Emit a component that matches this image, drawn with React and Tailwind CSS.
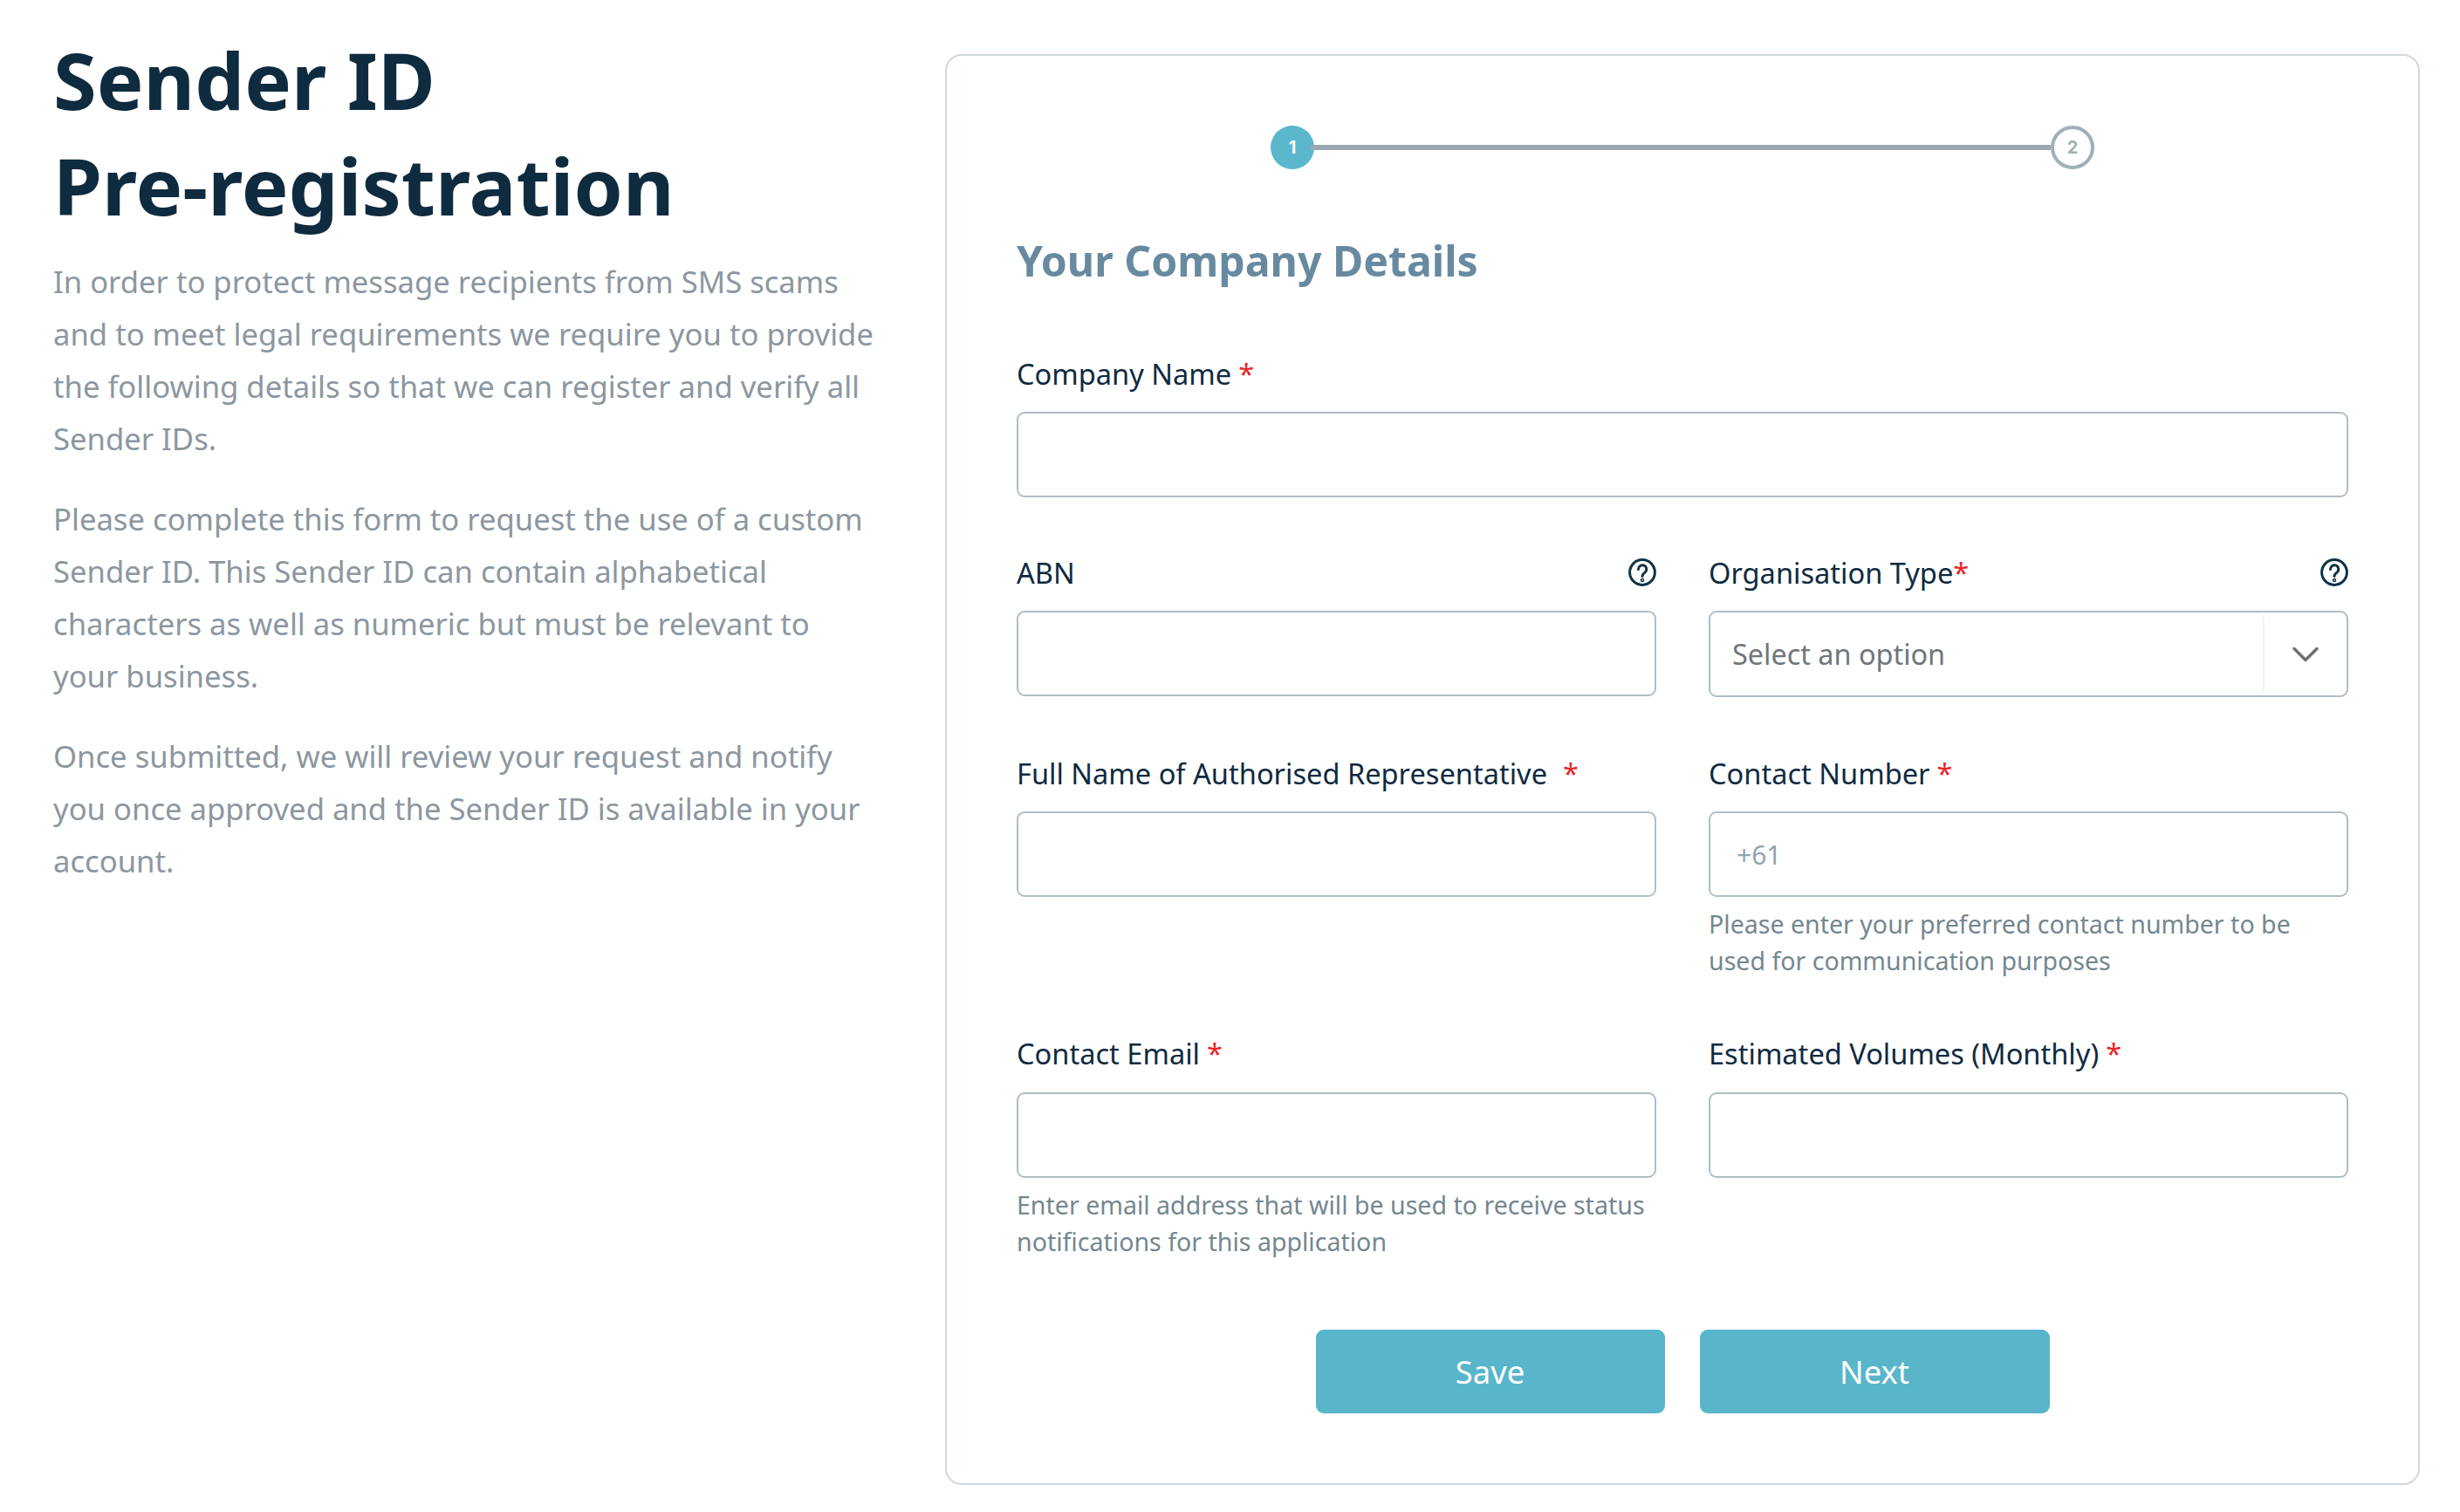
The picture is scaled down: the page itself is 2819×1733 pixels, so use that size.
import React from "react";
import { ChevronDown } from "lucide-react";

const inputCls = "block w-full h-[98px] border-2 border-[#b0bec5] rounded-[9px] bg-white px-[30px] text-[30px] text-[#0f2b3f] outline-none placeholder:text-[#90a4ae]";

function HelpIcon() {
  return (
    <svg viewBox="0 0 32 32" className="w-[32px] h-[32px] shrink-0 -mt-[2px]" fill="none" stroke="#0f3347" strokeWidth="3" strokeLinecap="round">
      <circle cx="16" cy="16" r="14.4" />
      <path d="M11.4 12.4a4.7 4.7 0 1 1 7.6 3.7c-1.9 1.4-3 2.2-3 4.4" />
      <circle cx="16" cy="25" r="0.7" />
    </svg>
  );
}

function Label({ children, star, gap = "ml-[8px]", help }) {
  return (
    <div className="flex items-center justify-between h-[44px] text-[32.6px] leading-[44px] text-[#0f2b3f]">
      <span>
        {children}
        {star && <span className={`${gap} text-[#e8262a]`}>*</span>}
      </span>
      {help && <HelpIcon />}
    </div>
  );
}

function Hint({ children, className = "mt-[10px]" }) {
  return <p className={`${className} text-[28.55px] leading-[42px] text-[#74878f]`}>{children}</p>;
}

export default function App() {
  return (
    <div className="min-h-[1733px] bg-white flex items-start pt-[31px] pl-[61px] font-['Noto_Sans',sans-serif]">
      <div className="w-[1022px] shrink-0 pr-[76px]">
        <h1 className="text-[90.2px] leading-[121px] font-bold text-[#0f2b3f]">Sender ID<br />Pre-registration</h1>
        <div className="mt-[20px] flex flex-col gap-[32px] text-[34.65px] leading-[60px] text-[#8c979f]">
          <p>In order to protect message recipients from SMS scams and to meet legal requirements we require you to provide the following details so that we can register and verify all Sender IDs.</p>
          <p>Please complete this form to request the use of a custom Sender ID. This Sender ID can contain alphabetical characters as well as numeric but must be relevant to your business.</p>
          <p>Once submitted, we will review your request and notify you once approved and the Sender ID is available in your account.</p>
        </div>
      </div>

      <div className="mt-[31px] w-[1690px] h-[1640px] shrink-0 border-2 border-[#cfd8dc] rounded-[19px] pt-[80px] px-[80px]">
        <div className="flex items-center justify-center">
          <div className="w-[50px] h-[50px] rounded-full bg-[#5ab7cc] flex items-center justify-center text-white text-[20px] font-bold font-['Inter',sans-serif]">1</div>
          <div className="relative -ml-[4px] w-[848px] h-[6px] bg-[#9aa9b0]" />
          <div className="w-[50px] h-[50px] rounded-full border-[4.5px] border-[#9fb0b8] flex items-center justify-center text-[#9fb0b8] text-[20px] font-bold font-['Inter',sans-serif]">2</div>
        </div>

        <h2 className="mt-[70px] text-[48.2px] leading-[68px] font-bold text-[#688aa0]">Your Company Details</h2>

        <div className="mt-[75px]">
          <Label star>Company Name</Label>
          <input className={`mt-[21px] ${inputCls}`} />
        </div>

        <div className="mt-[65px] grid grid-cols-2 gap-x-[60px]">
          <div>
            <Label help>ABN</Label>
            <input className={`mt-[21px] ${inputCls}`} />
          </div>
          <div>
            <Label star gap="" help>Organisation Type</Label>
            <div className="mt-[21px] h-[99px] border-2 border-[#b0bec5] rounded-[9px] flex items-stretch">
              <div className="flex-1 flex items-center pl-[25px] text-[32.4px] text-[#6f767b] border-r-2 border-[#f2f2f5] rounded-r-[9px]">Select an option</div>
              <div className="w-[94px] flex items-center justify-center text-[#6e6d73]">
                <ChevronDown className="w-[52px] h-[52px]" strokeWidth={1.6} />
              </div>
            </div>
          </div>
        </div>

        <div className="mt-[66px] grid grid-cols-2 gap-x-[60px]">
          <div>
            <Label star gap="ml-[18px]">Full Name of Authorised Representative</Label>
            <input className={`mt-[21px] ${inputCls}`} />
          </div>
          <div>
            <Label star>Contact Number</Label>
            <input className={`mt-[21px] ${inputCls}`} placeholder="+61" />
            <Hint>Please enter your preferred contact number to be used for communication purposes</Hint>
          </div>
        </div>

        <div className="mt-[64px] grid grid-cols-2 gap-x-[60px]">
          <div>
            <Label star>Contact Email</Label>
            <input className={`mt-[22px] ${inputCls}`} />
            <Hint className="mt-[10px]">Enter email address that will be used to receive status notifications for this application</Hint>
          </div>
          <div>
            <Label star>Estimated Volumes (Monthly)</Label>
            <input className={`mt-[22px] ${inputCls}`} />
          </div>
        </div>

        <div className="mt-[80px] flex justify-center gap-[40px]">
          <button className="w-[400px] h-[96px] rounded-[9px] bg-[#59b6ca] text-white text-[36.4px]">Save</button>
          <button className="w-[401px] h-[96px] rounded-[9px] bg-[#59b6ca] text-white text-[36.4px]">Next</button>
        </div>
      </div>
    </div>
  );
}
